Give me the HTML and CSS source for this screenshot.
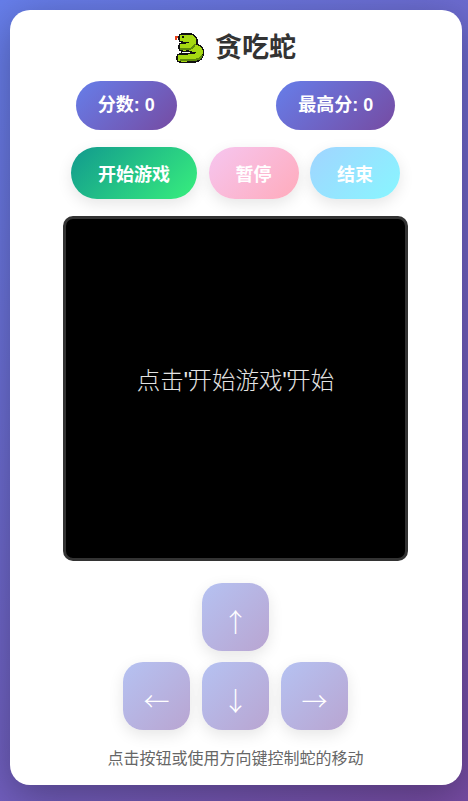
FILE: index.html
```html
<!DOCTYPE html>
<html lang="zh">
<head>
<meta charset="utf-8">
<title>贪吃蛇</title>
<link rel="stylesheet" href="styles.css">
</head>
<body>
<main class="card">
  <h1 class="title">
    <svg class="snake" viewBox="0 0 30 30" width="30" height="30" fill="none" shape-rendering="crispEdges" aria-hidden="true">
      <path d="M0 3h4v2H2v2H0z" fill="#e8411a"/>
      <path stroke="#111" stroke-width="10" stroke-linecap="round" stroke-linejoin="round" d="M17 15C24 15 25 18 24 21C23 25 20 25 12 25H6"/>
      <path stroke="#111" stroke-width="10" stroke-linecap="round" stroke-linejoin="round" d="M8 5H14C17 5 18 7 18 9C18 13 15 14 11 14H8"/>
      <path stroke="#a6d912" stroke-width="7" stroke-linecap="round" stroke-linejoin="round" d="M17 15C24 15 25 18 24 21C23 25 20 25 12 25H6"/>
      <path stroke="#5f8a0c" stroke-width="2" d="M5 27H17C22 27 26 26 27 22"/>
      <path stroke="#111" stroke-width="1.5" d="M6 20C10 21 15 21 19 20"/>
      <path stroke="#a6d912" stroke-width="7" stroke-linecap="round" stroke-linejoin="round" d="M8 5H14C17 5 18 7 18 9C18 13 15 14 11 14H8"/>
      <path fill="#111" d="M7 3h2v2H7z"/>
      <path stroke="#5f8a0c" stroke-width="2" d="M5 16H13C16 16 19 15 20 11"/>
    </svg>
    <span>贪吃蛇</span>
  </h1>
  <div class="scores">
    <div class="score">分数: 0</div>
    <div class="score">最高分: 0</div>
  </div>
  <div class="actions">
    <button class="btn btn-start">开始游戏</button>
    <button class="btn btn-pause">暂停</button>
    <button class="btn btn-end">结束</button>
  </div>
  <div class="board"><span>点击<span class="quote">"</span>开始游戏<span class="quote">"</span>开始</span></div>
  <div class="pad">
    <button class="key key-up">↑</button>
    <button class="key key-left">←</button>
    <button class="key key-down">↓</button>
    <button class="key key-right">→</button>
  </div>
  <p class="hint">点击按钮或使用方向键控制蛇的移动</p>
</main>
</body>
</html>
```
FILE: styles.css
```css
* { box-sizing: border-box; }
html, body { height: 100%; }
body {
  margin: 0;
  padding: 10px 6px 16px 10px;
  overflow: hidden;
  background: linear-gradient(135deg, #667eea 0%, #764ba2 100%);
  font-family: "Liberation Sans", "Noto Sans CJK SC", sans-serif;
}
.card {
  width: 452px;
  height: 775px;
  padding: 17px 17px 0 16px;
  background: #fff;
  border-radius: 20px;
  box-shadow: 0 10px 40px rgba(0, 0, 0, .3);
  display: flex;
  flex-direction: column;
  align-items: center;
}
.title {
  margin: 0;
  height: 42px;
  display: flex;
  align-items: center;
  gap: 10px;
  font-size: 27px;
  line-height: 42px;
  font-weight: 700;
  color: #333;
}
.snake { display: block; }
.scores {
  margin-top: 12px;
  width: 100%;
  display: flex;
  justify-content: space-around;
}
.score {
  height: 49px;
  padding: 0 22px;
  border-radius: 25px;
  background: linear-gradient(135deg, #667eea, #764ba2);
  color: #fff;
  font-size: 18px;
  font-weight: 700;
  line-height: 49px;
}
.actions {
  margin-top: 17px;
  display: flex;
  gap: 11.5px;
}
.btn {
  height: 52px;
  padding: 0 27px;
  border: 0;
  border-radius: 26px;
  color: #fff;
  font: 700 18px "Liberation Sans", "Noto Sans CJK SC", sans-serif;
  box-shadow: 0 5px 15px rgba(0, 0, 0, .1);
}
.btn-start { background: linear-gradient(135deg, #11998e, #38ef7d); }
.btn-pause { background: linear-gradient(135deg, #f6c6f0, #ffabbb); }
.btn-end { background: linear-gradient(135deg, #a1d4ff, #88f6ff); }
.board {
  margin-top: 17px;
  width: 345px;
  height: 345px;
  padding-bottom: 20px;
  border: 3px solid #333;
  border-radius: 10px;
  background: #000;
  color: #e4e4e4;
  font-size: 23.5px;
  font-weight: 300;
  display: flex;
  align-items: center;
  justify-content: center;
}
.quote { letter-spacing: -3.5px; }
.pad {
  margin-top: 22px;
  display: grid;
  grid-template-columns: repeat(3, 67px);
  grid-template-rows: repeat(2, 68px);
  gap: 11px 12px;
}
.key {
  padding: 6px 0 0;
  border: 0;
  border-radius: 20px;
  background: linear-gradient(135deg, #b5c2f2, #b9a5d1);
  color: #fff;
  font: 300 26px "Noto Sans CJK SC", "Liberation Sans", sans-serif;
  box-shadow: 0 5px 15px rgba(0, 0, 0, .1);
}
.key-up { grid-column: 2; grid-row: 1; }
.key-left { grid-column: 1; grid-row: 2; }
.key-down { grid-column: 2; grid-row: 2; }
.key-right { grid-column: 3; grid-row: 2; }
.hint {
  margin: 17px 0 0;
  font-size: 16px;
  line-height: 24px;
  color: #666;
}
```
